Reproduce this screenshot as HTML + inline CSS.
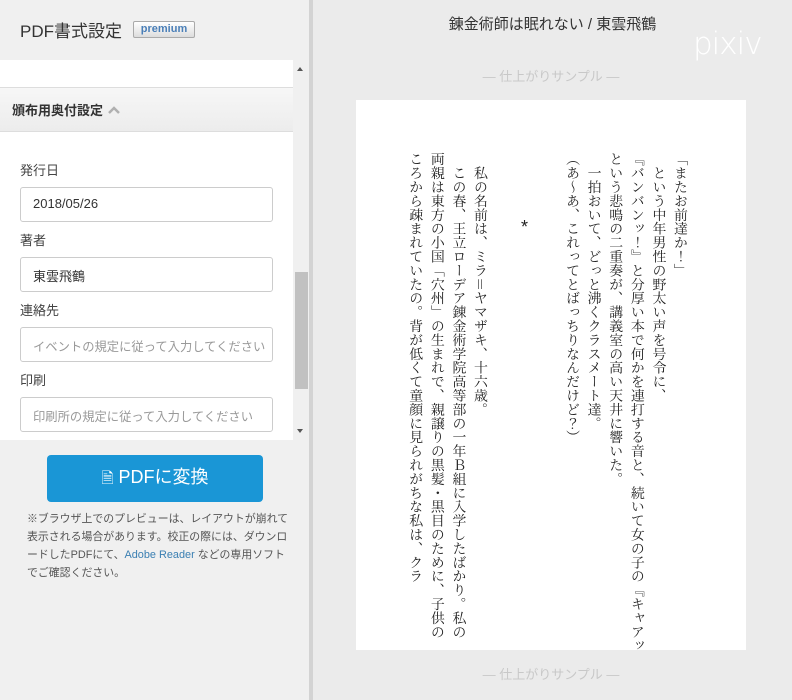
<!DOCTYPE html>
<html><head><meta charset="utf-8"><style>
*{margin:0;padding:0;box-sizing:border-box}
body{width:792px;height:700px;overflow:hidden;background:#ebebeb;font-family:"Liberation Sans","Noto Sans CJK JP",sans-serif;position:relative}
.left{position:absolute;left:0;top:0;width:309px;height:700px;background:#f0f0f0}
.div{position:absolute;left:309px;top:0;width:4px;height:700px;background:#d3d3d3}
.h1{position:absolute;left:20px;top:17px;font-size:17px;color:#333}
.badge{position:absolute;left:133px;top:21px;width:62px;height:17px;border:1px solid #aaa;border-radius:2px;background:linear-gradient(#fff,#ddd);font-size:11px;font-weight:bold;color:#4a7fb8;text-align:center;line-height:15px}
.scroll{position:absolute;left:0;top:60px;width:293px;height:380px;background:#fff;overflow:hidden}
.sb{position:absolute;left:293px;top:60px;width:15px;height:380px;background:#f0f0f0}
.thumb{position:absolute;left:295px;top:272px;width:13px;height:117px;background:#c1c1c1}
.sec{position:absolute;left:0;top:27px;width:293px;height:45px;background:linear-gradient(#f7f7f7,#ececec);border-top:1px solid #ddd;border-bottom:1px solid #ddd;font-size:13px;font-weight:bold;color:#333;padding:12px 0 0 12px}
.lab{position:absolute;left:20px;font-size:13px;color:#444}
.inp{position:absolute;left:20px;width:253px;height:35px;border:1px solid #ccc;border-radius:3px;font-size:13px;color:#333;padding:8px 0 0 12px;white-space:nowrap;overflow:hidden}
.ph{color:#999;font-size:12.3px;padding-top:9px}
.btn{position:absolute;left:47px;top:455px;width:216px;height:47px;background:#1a96d6;border-radius:4px;color:#fff;font-size:18px;text-align:center;line-height:45px}
.note{position:absolute;left:27px;top:510px;width:266px;font-size:10.9px;line-height:18px;color:#555}
.note a{color:#3a7fb2}
.title{position:absolute;left:313px;width:479px;top:13px;text-align:center;font-size:15px;color:#333}
.pixiv{position:absolute;left:693px;top:26px;font-size:31px;color:#fff;letter-spacing:-1px;font-family:"DejaVu Sans",sans-serif;font-weight:200}
.samp{position:absolute;left:356px;width:390px;text-align:center;font-size:13px;color:#c8c8c8}
.page{position:absolute;left:356px;top:100px;width:390px;height:550px;background:#fff}
.vt{position:absolute;top:52px;height:495px;writing-mode:vertical-rl;font-family:"Noto Serif CJK JP","Noto Serif CJK SC",serif;font-size:13.9px;line-height:21.6px;color:#222;white-space:pre}
</style></head><body>
<div class="left">
<div class="h1">PDF書式設定</div>
<div class="badge">premium</div>
<div class="scroll">
<div class="sec">頒布用奥付設定 <svg width="14" height="10" viewBox="0 0 14 10" style="vertical-align:0"><path d="M2 8 L7 3 L12 8" fill="none" stroke="#b0b0b0" stroke-width="2.5"/></svg></div>
<div class="lab" style="top:100px">発行日</div>
<div class="inp" style="top:127px">2018/05/26</div>
<div class="lab" style="top:170px">著者</div>
<div class="inp" style="top:197px">東雲飛鶴</div>
<div class="lab" style="top:240px">連絡先</div>
<div class="inp ph" style="top:267px">イベントの規定に従って入力してください</div>
<div class="lab" style="top:310px">印刷</div>
<div class="inp ph" style="top:337px">印刷所の規定に従って入力してください</div>
</div>
<div class="sb"><div style="position:absolute;left:4px;top:7px;border:3px solid transparent;border-bottom:4px solid #555;border-top:0"></div><div style="position:absolute;left:4px;top:369px;border:3px solid transparent;border-top:4px solid #555;border-bottom:0"></div></div>
<div class="thumb"></div>
<div class="btn"><span style="font-size:15px">&#128462;</span> PDFに変換</div>
<div class="note">※ブラウザ上でのプレビューは、レイアウトが崩れて表示される場合があります。校正の際には、ダウンロードしたPDFにて、<a>Adobe Reader</a> などの専用ソフトでご確認ください。</div>
</div>
<div class="div"></div>
<div class="title">錬金術師は眠れない / 東雲飛鶴</div>
<div class="pixiv">pixiv</div>
<div class="samp" style="top:66px">― 仕上がりサンプル ―</div>
<div class="page">
<div class="vt" style="right:55px">「またお前達か！」
　という中年男性の野太い声を号令に、
『バンバンッ！』と分厚い本で何かを連打する音と、続いて女の子の『キャアッ
という悲鳴の二重奏が、講義室の高い天井に響いた。
　一拍おいて、どっと沸くクラスメート達。
（あ～あ、これってとばっちりなんだけど？）</div>
<div style="position:absolute;left:165px;top:117px;font-size:18px;color:#222">*</div>
<div class="vt" style="right:255px">　私の名前は、ミラ＝ヤマザキ、十六歳。
　この春、王立ローデア錬金術学院高等部の一年Ｂ組に入学したばかり。私の
両親は東方の小国「穴州」の生まれで、親譲りの黒髪・黒目のために、子供の
ころから疎まれていたの。背が低くて童顔に見られがちな私は、クラ</div>
</div>
<div class="samp" style="top:664px">― 仕上がりサンプル ―</div>
</body></html>
